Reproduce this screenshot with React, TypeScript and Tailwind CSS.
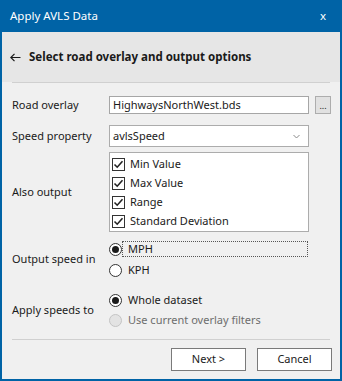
import React from "react";

const Check = () => (
  <div className="w-[13px] h-[13px] border border-[#333333] bg-white flex items-center justify-center shrink-0">
    <svg width="11" height="11" viewBox="0 0 11 11">
      <path d="M1.5 5.5 L4.2 8.2 L9.5 2.2" fill="none" stroke="#222222" strokeWidth="1.6" />
    </svg>
  </div>
);

const Radio = ({ on, disabled }: { on?: boolean; disabled?: boolean }) => (
  <div
    className={
      disabled
        ? "w-[13px] h-[13px] rounded-full border border-[#c4c4c4] bg-[#e3e3e3] shrink-0"
        : "w-[13px] h-[13px] rounded-full border border-[#333333] bg-white flex items-center justify-center shrink-0"
    }
  >
    {on && <div className="w-[7px] h-[7px] rounded-full bg-[#1a1a1a]" />}
  </div>
);

export default function App() {
  const items = ["Min Value", "Max Value", "Range", "Standard Deviation"];
  return (
    <div
      className="w-[342px] h-[381px] bg-[#0063a6] px-[2px] pb-[2px] flex flex-col text-[11px] text-[#1a1a1a]"
      style={{ fontFamily: '"Noto Sans", "Segoe UI", sans-serif' }}
    >
      <div className="h-[32px] shrink-0 flex items-center justify-between pl-[8px] pr-[14px] text-white text-[11.5px]">
        <span>Apply AVLS Data</span>
        <span>x</span>
      </div>
      <div className="flex-1 bg-[#f0f0f0] flex flex-col">
        <div className="h-[50px] bg-[#e6e6e6] flex items-center pl-[8px] font-bold text-[11.5px]">
          <svg width="11" height="9" viewBox="0 0 11 9" className="mr-[8px] mt-[1px]">
            <path d="M0.8 4.5 H10.5 M4.5 0.8 L0.8 4.5 L4.5 8.2" fill="none" stroke="#1a1a1a" strokeWidth="1.2" />
          </svg>
          <span>Select road overlay and output options</span>
        </div>
        <div className="h-[1px] bg-[#d0d0d0] mx-[10px]" />

        {/* Road overlay */}
        <div className="mt-[13px] h-[18px] flex items-center pl-[10px]">
          <div className="w-[97px]">Road overlay</div>
          <div className="w-[200px] h-[18px] bg-white border border-[#a6a6a6] flex items-center pl-[3px]">
            HighwaysNorthWest.bds
          </div>
          <div className="ml-[6px] w-[16px] h-[18px] bg-[#e1e1e1] border border-[#adadad] flex items-end justify-center pb-[3px] text-[9px] leading-none">
            ...
          </div>
        </div>

        {/* Speed property */}
        <div className="mt-[11px] h-[22px] flex items-center pl-[10px]">
          <div className="w-[97px]">Speed property</div>
          <div className="w-[200px] h-[22px] bg-white border border-[#acacac] flex items-center justify-between pl-[3px] pr-[8px]">
            <span>avlsSpeed</span>
            <svg width="7" height="5" viewBox="0 0 7 5">
              <path d="M0.5 1 L3.5 4 L6.5 1" fill="none" stroke="#8a8a8a" strokeWidth="1" />
            </svg>
          </div>
        </div>

        {/* Also output */}
        <div className="mt-[5px] flex items-center pl-[10px]">
          <div className="w-[97px]">Also output</div>
          <div className="w-[200px] h-[80px] bg-white border border-[#acacac] pt-[2px] pl-[2px] flex flex-col">
            {items.map((t) => (
              <div key={t} className="h-[19px] flex items-center">
                <Check />
                <span className="ml-[5px]">{t}</span>
              </div>
            ))}
          </div>
        </div>

        {/* Output speed in */}
        <div className="mt-[9px] flex items-center pl-[10px]">
          <div className="w-[97px]">Output speed in</div>
          <div className="flex flex-col gap-[5px]">
            <div className="h-[16px] flex items-center w-[199px]">
              <Radio on />
              <div className="flex-1 h-[16px] border border-dotted border-[#555555] flex items-center pl-[5px]">
                MPH
              </div>
            </div>
            <div className="h-[16px] flex items-center">
              <Radio />
              <span className="ml-[6px]">KPH</span>
            </div>
          </div>
        </div>

        {/* Apply speeds to */}
        <div className="mt-[14px] flex items-center pl-[10px]">
          <div className="w-[97px]">Apply speeds to</div>
          <div className="flex flex-col gap-[4px]">
            <div className="h-[16px] flex items-center">
              <Radio on />
              <span className="ml-[6px]">Whole dataset</span>
            </div>
            <div className="h-[16px] flex items-center">
              <Radio disabled />
              <span className="ml-[6px] text-[#6d6d6d]">Use current overlay filters</span>
            </div>
          </div>
        </div>

        <div className="mt-[11px] h-[1px] bg-[#d0d0d0] mx-[10px]" />

        <div className="mt-[8px] flex justify-end gap-[11px] pr-[8px]">
          <div className="w-[75px] h-[23px] bg-white border border-[#7a7a7a] flex items-center justify-center">
            Next &gt;
          </div>
          <div className="w-[75px] h-[23px] bg-white border border-[#7a7a7a] flex items-center justify-center">
            Cancel
          </div>
        </div>
      </div>
    </div>
  );
}
